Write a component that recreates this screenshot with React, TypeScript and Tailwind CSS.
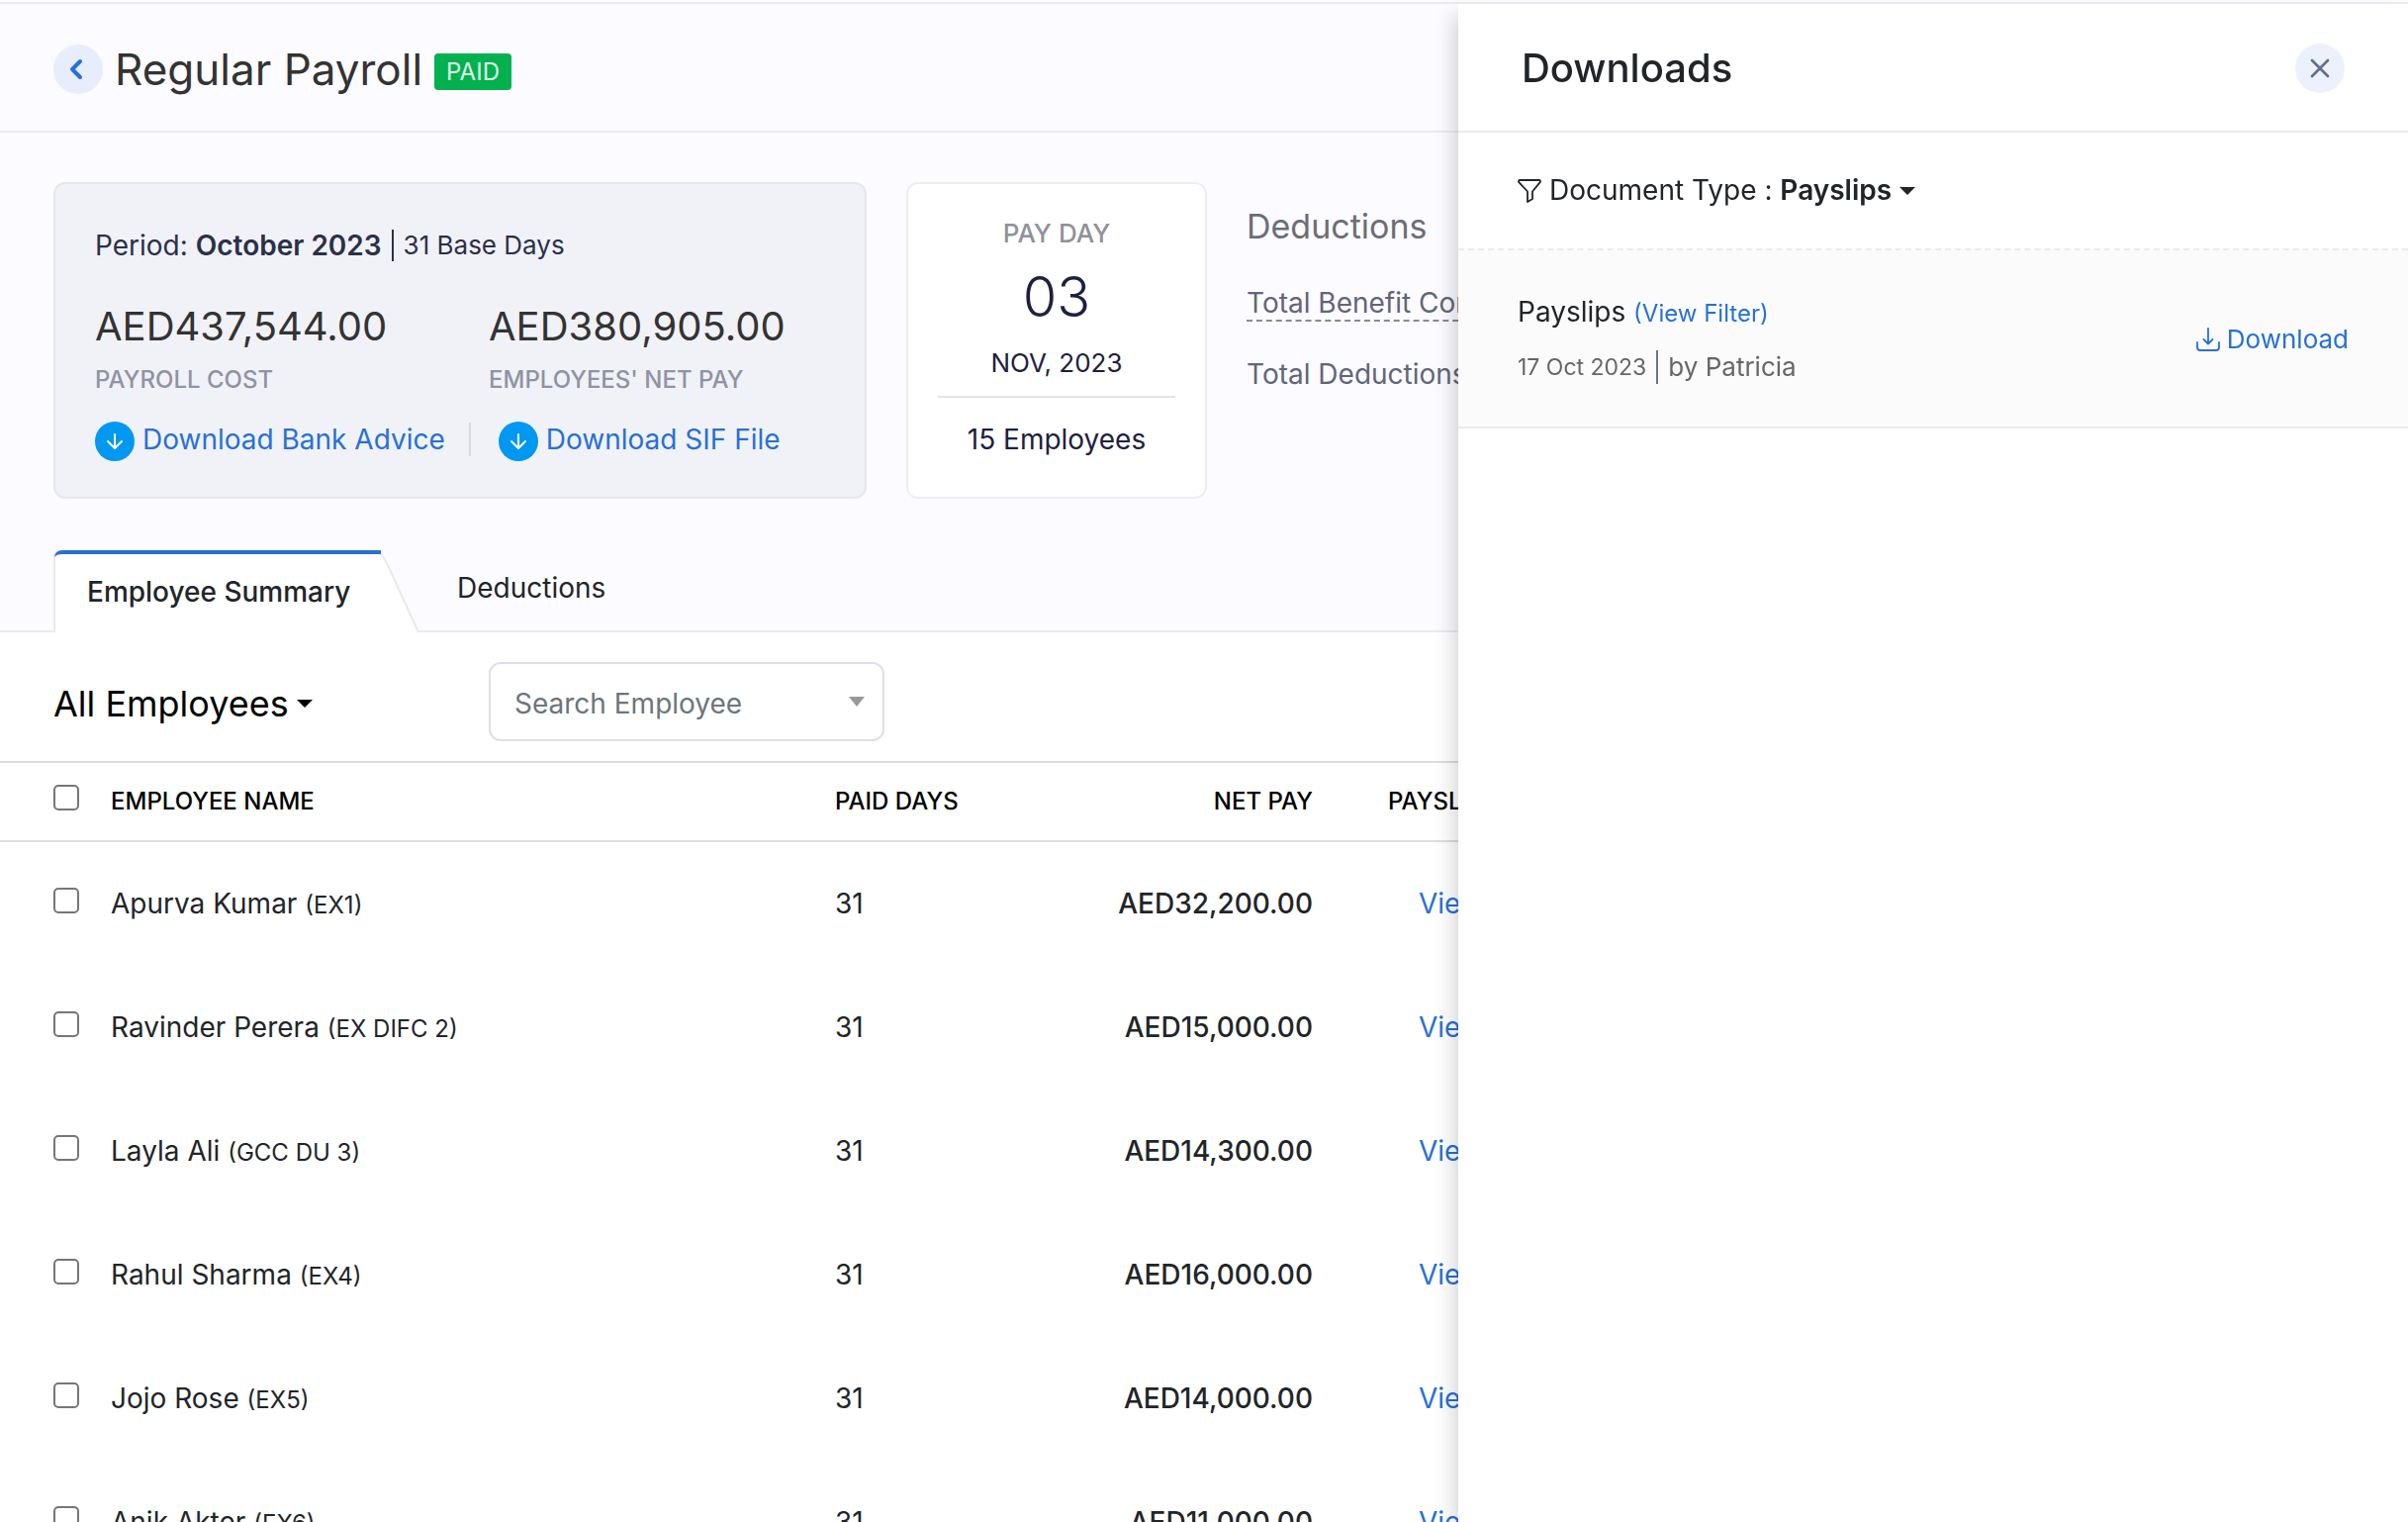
import { ArrowDown, ChevronLeft, X } from "lucide-react";

type Employee = {
  name: string;
  code: string;
  days: number;
  netPay: string;
};

const employees: Employee[] = [
  { name: "Apurva Kumar", code: "EX1", days: 31, netPay: "AED32,200.00" },
  { name: "Ravinder Perera", code: "EX DIFC 2", days: 31, netPay: "AED15,000.00" },
  { name: "Layla Ali", code: "GCC DU 3", days: 31, netPay: "AED14,300.00" },
  { name: "Rahul Sharma", code: "EX4", days: 31, netPay: "AED16,000.00" },
  { name: "Jojo Rose", code: "EX5", days: 31, netPay: "AED14,000.00" },
  { name: "Anik Akter", code: "EX6", days: 31, netPay: "AED11,000.00" },
];

function Caret({ className }: { className: string }) {
  return (
    <svg viewBox="0 0 16 8" className={className} fill="currentColor" preserveAspectRatio="none" aria-hidden="true">
      <path d="M0 0h16L8 8z" />
    </svg>
  );
}

function FunnelIcon() {
  return (
    <svg viewBox="0 0 24 24" className="size-6" fill="none" stroke="currentColor" strokeWidth="1.8" strokeLinejoin="round" aria-hidden="true">
      <path d="M2.300 1h19.400a1.300 1.300 0 0 1 1 2.100L15 12.500v7.500l-5 3v-10.500L1.300 3.100A1.300 1.300 0 0 1 2.300 1z" />
    </svg>
  );
}

function TrayDownloadIcon() {
  return (
    <svg viewBox="0 0 24 24" className="size-6" fill="none" stroke="currentColor" strokeWidth="1.8" strokeLinecap="round" strokeLinejoin="round" aria-hidden="true">
      <path d="M12 1v15M7.500 12l4.500 4.500 4.500-4.500" />
      <path d="M1 15v5a3 3 0 0 0 3 3h16a3 3 0 0 0 3-3v-5" />
    </svg>
  );
}

function Checkbox({ label }: { label: string }) {
  return (
    <input
      type="checkbox"
      aria-label={label}
      className="block size-[26px] appearance-none rounded-[5px] border-2 border-[#767676] bg-white checked:bg-[#2770d6]"
    />
  );
}

function FileLink({ children }: { children: string }) {
  return (
    <a href="#" className="flex items-center gap-2 text-[28px] leading-10 text-[#2770d6]">
      <span className="mt-1 flex size-10 items-center justify-center rounded-full bg-[#0098f0] text-white">
        <ArrowDown className="size-6" strokeWidth={2} />
      </span>
      {children}
    </a>
  );
}

function PageHeader() {
  return (
    <header className="flex h-[132px] items-center border-y-2 border-[#ececee] px-[54px] pt-1">
      <button
        type="button"
        aria-label="Back"
        className="flex size-[50px] items-center justify-center rounded-full bg-[#e7edfb] pr-1 text-[#2770d6]"
      >
        <ChevronLeft className="size-8" strokeWidth={3} />
      </button>
      <h1 className="ml-3 text-[44px] leading-[56px] text-[#333]">Regular Payroll</h1>
      <span className="mt-1 ml-3 rounded bg-[#04b04f] px-3 text-2xl leading-[37px] text-[#dffbe9]">
        PAID
      </span>
    </header>
  );
}

function PayrollSummary() {
  return (
    <section className="flex items-start gap-10 px-[54px] pt-[50px]">
      <div className="h-80 w-[822px] shrink-0 rounded-xl border-2 border-[#e6e7ee] bg-[#f1f2f8] px-10 pt-10">
        <p className="flex items-center text-[28px] leading-[44px] text-[#2b3048]">
          <span>
            Period: <span className="font-semibold">October 2023</span>
          </span>
          <span className="mx-[10px] h-8 w-[2px] bg-[#2b3048]" />
          <span className="text-[26px]">31 Base Days</span>
        </p>
        <dl className="mt-8 flex">
          <div className="flex w-[398px] flex-col">
            <dt className="order-2 text-2xl leading-9 font-medium text-[#8f93a3]">PAYROLL COST</dt>
            <dd className="pb-2 text-[40px] leading-[56px] text-[#333]">AED437,544.00</dd>
          </div>
          <div className="flex flex-col">
            <dt className="order-2 text-2xl leading-9 font-medium text-[#8f93a3]">EMPLOYEES' NET PAY</dt>
            <dd className="pb-2 text-[40px] leading-[56px] text-[#333]">AED380,905.00</dd>
          </div>
        </dl>
        <div className="mt-5 flex items-center">
          <FileLink>Download Bank Advice</FileLink>
          <span className="mr-7 ml-6 h-[34px] w-[2px] bg-[#d9dae0]" />
          <FileLink>Download SIF File</FileLink>
        </div>
      </div>

      <div className="h-80 w-[304px] shrink-0 rounded-xl border-2 border-[#ededf3] bg-white px-[30px] pt-[30px] text-center text-[#1d2140]">
        <p className="text-[26px] leading-10 font-medium text-[#8f929b]">PAY DAY</p>
        <p className="pt-2 text-[56px] leading-[72px] font-light">03</p>
        <p className="pt-[10px] pb-3 text-[26px] leading-[42px]">NOV, 2023</p>
        <p className="border-t-2 border-[#e3e3e5] pt-[22px] text-[28px] leading-10">15 Employees</p>
      </div>

      <div className="pt-5 text-[28px] leading-10 whitespace-nowrap text-[#62657a]">
        <h2 className="text-[34px] leading-[50px] text-[#6c6d78]">Deductions</h2>
        <p className="mt-8">
          <span className="border-b-2 border-dashed border-[#8a8a90]">Total Benefit Contributions</span>
        </p>
        <p className="mt-8">Total Deductions</p>
      </div>
    </section>
  );
}

function SummaryTabs() {
  return (
    <nav className="mt-[52px] flex border-b-2 border-[#ebebeb] pl-[54px]">
      <div className="relative -mb-[2px] h-[83px]">
        <svg viewBox="0 0 370 83" className="absolute inset-y-0 left-0 w-[370px]" aria-hidden="true">
          <path d="M1 83V8q0-7 7-7h317q7 2 12 12l32 70z" fill="#fff" />
          <path d="M1 83V8q0-7 7-7h317q7 2 12 12l32 70" fill="none" stroke="#e9e9ec" strokeWidth="2" />
          <path d="M1 7q1-7 8-7h322v4H9q-6 0-8 3z" fill="#2770d6" />
        </svg>
        <a href="#" className="relative block w-[370px] pt-6 pl-[34px] text-[28px] leading-9 font-medium text-[#212529]">
          Employee Summary
        </a>
      </div>
      <a href="#" className="pt-5 pl-[38px] text-[28px] leading-9 text-[#212529]">
        Deductions
      </a>
    </nav>
  );
}

function EmployeeToolbar() {
  return (
    <div className="flex items-center bg-white pt-[30px] pb-5 pl-[54px]">
      <button type="button" className="flex w-[440px] items-center gap-2 pt-1 text-left text-4xl text-black">
        All Employees
        <Caret className="h-2 w-4" />
      </button>
      <div className="flex h-20 w-[400px] items-center rounded-xl border-2 border-[#dfe0e7] pr-[18px] pl-6">
        <input
          type="text"
          aria-label="Search Employee"
          placeholder="Search Employee"
          className="min-w-0 flex-1 bg-transparent pt-1 text-[28px] outline-none placeholder:text-[#6c757d]"
        />
        <Caret className="h-[10px] w-4 text-[#999]" />
      </div>
    </div>
  );
}

function EmployeeTable() {
  return (
    <table className="w-full table-fixed bg-white text-left text-[28px] leading-10 text-[#212529]">
      <thead className="border-y-2 border-[#dcdddd] text-2xl text-black">
        <tr className="h-20">
          <th className="w-28 pb-2 pl-[54px]">
            <Checkbox label="Select all employees" />
          </th>
          <th className="w-[732px] font-medium">EMPLOYEE NAME</th>
          <th className="w-[200px] font-medium">PAID DAYS</th>
          <th className="w-[283px] text-right font-medium">NET PAY</th>
          <th className="pl-[76px] font-medium">PAYSLIP</th>
        </tr>
      </thead>
      <tbody>
        {employees.map((employee) => (
          <tr key={employee.code} className="h-[125px]">
            <td className="pb-[6px] pl-[54px]">
              <Checkbox label={`Select ${employee.name}`} />
            </td>
            <td>
              {employee.name} <span className="text-2xl">({employee.code})</span>
            </td>
            <td>{employee.days}</td>
            <td className="text-right font-medium">{employee.netPay}</td>
            <td className="pl-[107px]">
              <a href="#" className="text-[#2770d6]">
                View
              </a>
            </td>
          </tr>
        ))}
      </tbody>
    </table>
  );
}

function DownloadsPanel() {
  return (
    <aside className="fixed top-1 right-0 bottom-0 w-[960px] bg-white text-[#212529] shadow-[-8px_8px_20px_-4px_rgba(0,0,0,0.18)]">
      <div className="flex h-[130px] items-center justify-between border-b-2 border-[#ebebeb] px-16 pt-[2px]">
        <h2 className="text-[40px] leading-[56px] font-medium">Downloads</h2>
        <button
          type="button"
          aria-label="Close"
          className="flex size-[50px] items-center justify-center rounded-full bg-[#edf1fb] text-[#62718a]"
        >
          <X className="size-8" strokeWidth={2} />
        </button>
      </div>

      <div className="border-b-2 border-dashed border-[#ebebeb] px-[60px] py-[38px]">
        <button type="button" className="flex items-center gap-2 text-[28px] leading-[41px]">
          <FunnelIcon />
          <span>
            Document Type : <span className="font-semibold">Payslips</span>
          </span>
          <Caret className="h-2 w-4" />
        </button>
      </div>

      <div className="flex items-center justify-between border-b-2 border-[#ebebeb] bg-[#fbfbfb] px-[60px] pt-[42px] pb-10">
        <div>
          <p className="text-[28px] leading-10">
            Payslips{" "}
            <a href="#" className="text-2xl text-[#2770d6]">
              (View Filter)
            </a>
          </p>
          <p className="mt-4 flex items-center text-[26px] leading-10 text-[#666]">
            <span className="text-[23px]">17 Oct 2023</span>
            <span className="mx-[10px] h-[34px] w-[2px] bg-[#6c757d]" />
            by Patricia
          </p>
        </div>
        <a href="#" className="flex items-center gap-[7px] text-[26px] leading-10 text-[#2770d6]">
          <TrayDownloadIcon />
          Download
        </a>
      </div>
    </aside>
  );
}

export default function App() {
  return (
    <div className="h-screen overflow-hidden bg-[#fcfbff] pt-[2px] font-['Inter',sans-serif]">
      <main>
        <PageHeader />
        <PayrollSummary />
        <SummaryTabs />
        <EmployeeToolbar />
        <EmployeeTable />
      </main>
      <DownloadsPanel />
    </div>
  );
}
